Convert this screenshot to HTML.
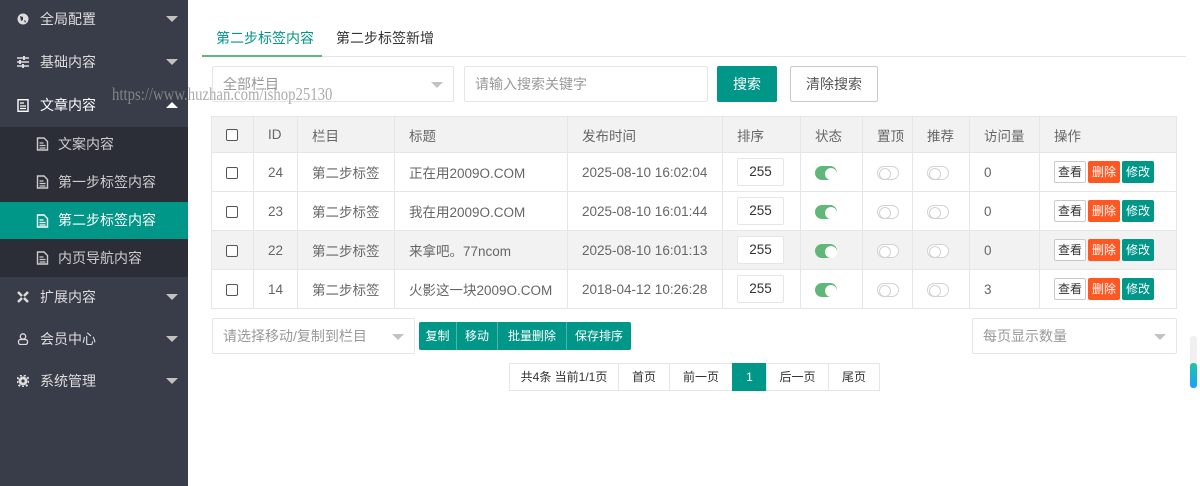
<!DOCTYPE html><html><head><meta charset="utf-8"><style>
*{box-sizing:border-box;margin:0;padding:0}
body{width:1200px;height:486px;overflow:hidden;background:#fff;font-family:"Liberation Sans","Noto Sans CJK SC",sans-serif;font-size:14px;color:#666;position:relative}
.side{position:absolute;left:0;top:0;width:188px;height:486px;background:#393d49}
.it{position:absolute;left:0;width:188px;height:38px;line-height:38px;color:#ddd;font-size:14px;padding-left:40px}
.it .ic{position:absolute;left:17px;top:13px;width:12px;height:12px}
.it .ar{position:absolute;right:10px;top:16px;border:6px solid transparent;border-top:6px solid #c2c2c2}
.it .up{top:10px;border-top-color:transparent;border-bottom:6px solid #fff}
.sub{position:absolute;left:0;top:127px;width:188px;height:150px;background:#2b2e37}
.si{position:absolute;left:0;width:188px;height:38px;line-height:38px;color:#ccc;padding-left:58px}
.si svg{position:absolute;left:36px;top:12px;width:13px;height:14px}
.act{background:#009688;color:#fff}
.abs{position:absolute}
.inp{position:absolute;border:1px solid #e6e6e6;border-radius:2px;height:36px;line-height:34px;padding-left:10px;color:#999;background:#fff}
.caret{position:absolute;right:10px;top:15px;border:6px solid transparent;border-top:6px solid #c2c2c2}
table{position:absolute;left:211px;top:116px;width:966px;border-collapse:collapse;font-size:13.5px;table-layout:fixed}
td,th{border:1px solid #e6e6e6;padding:0 0 0 14px;text-align:left;font-weight:normal;color:#666;height:39px;white-space:nowrap;overflow:hidden}
th{background:#f2f2f2;height:36px}
tr.g td{background:#f2f2f2}
.cb{display:inline-block;width:12px;height:12px;border:1px solid #555;border-radius:2px;background:#fff;vertical-align:middle}
.sort{display:inline-block;width:47px;height:28px;border:1px solid #e6e6e6;border-radius:2px;background:#fff;text-align:center;line-height:26px;color:#333}
.sw{display:inline-block;width:22px;height:14px;border-radius:8px;border:1px solid #d2d2d2;position:relative;vertical-align:middle;background:#fff}
.sw:after{content:"";position:absolute;left:1px;top:1px;width:10px;height:10px;border-radius:50%;border:1px solid #d2d2d2;background:#fff}
.sw.on{background:#5fb878;border-color:#5fb878}
.sw.on:after{left:9px;border-color:#fff}
.b{display:inline-block;height:22px;line-height:20px;padding:0 3px;font-size:12px;border-radius:2px;vertical-align:middle;margin-right:2px}
.bv{border:1px solid #c9c9c9;color:#333;background:#fff}
.bd{background:#ff5722;color:#fff;border:1px solid #ff5722}
.be{background:#009688;color:#fff;border:1px solid #009688}
.pg{position:absolute;top:363px;height:28px;line-height:26px;border:1px solid #e6e6e6;text-align:center;font-size:12px;color:#333;background:#fff}
.grp span{text-align:center;border-right:1px solid #4db6ac;display:block}
</style></head><body>
<div class="side">
<div class="it" style="top:0">全局配置<svg class="ic" viewBox="0 0 12 12"><circle cx="6" cy="6" r="5.5" fill="#ddd"/><path d="M3 3l3 1 0 3-2 1zM7 7l2 1-1 2z" fill="#393d49"/></svg><span class="ar"></span></div>
<div class="it" style="top:43px">基础内容<svg class="ic" viewBox="0 0 12 12"><path d="M0 2h12M0 6h12M0 10h12" stroke="#ddd" stroke-width="1.5"/><path d="M7 0v4M3 4v4M6 8v4" stroke="#ddd" stroke-width="2"/></svg><span class="ar"></span></div>
<div class="it" style="top:86px;color:#fff">文章内容<svg class="ic" viewBox="0 0 12 13" style="height:13px"><rect x="1" y="0.7" width="10" height="11.6" fill="none" stroke="#fff" stroke-width="1.4"/><path d="M3 4h4M3 7h6M3 9.5h6" stroke="#fff" stroke-width="1.2"/></svg><span class="ar up"></span></div>
<div class="sub"></div>
<div class="si" style="top:125px"><svg viewBox="0 0 13 14"><path d="M1.5 1h6.5l3.5 3.5v8.5h-10z" fill="none" stroke="#ccc" stroke-width="1.4"/><path d="M3.5 6h4M3.5 8.5h6M3.5 11h6" stroke="#ccc" stroke-width="1.2"/></svg>文案内容</div>
<div class="si" style="top:163px"><svg viewBox="0 0 13 14"><path d="M1.5 1h6.5l3.5 3.5v8.5h-10z" fill="none" stroke="#ccc" stroke-width="1.4"/><path d="M3.5 6h4M3.5 8.5h6M3.5 11h6" stroke="#ccc" stroke-width="1.2"/></svg>第一步标签内容</div>
<div class="si act" style="top:202px;height:37px;line-height:37px;color:#fff"><svg viewBox="0 0 13 14"><path d="M1.5 1h6.5l3.5 3.5v8.5h-10z" fill="none" stroke="#fff" stroke-width="1.4"/><path d="M3.5 6h4M3.5 8.5h6M3.5 11h6" stroke="#fff" stroke-width="1.2"/></svg>第二步标签内容</div>
<div class="si" style="top:239px"><svg viewBox="0 0 13 14"><path d="M1.5 1h6.5l3.5 3.5v8.5h-10z" fill="none" stroke="#ccc" stroke-width="1.4"/><path d="M3.5 6h4M3.5 8.5h6M3.5 11h6" stroke="#ccc" stroke-width="1.2"/></svg>内页导航内容</div>
<div class="it" style="top:278px">扩展内容<svg class="ic" viewBox="0 0 12 12"><path d="M1 1l4 4M11 1l-4 4M1 11l4-4M11 11l-4-4" stroke="#ddd" stroke-width="2.5"/></svg><span class="ar"></span></div>
<div class="it" style="top:320px">会员中心<svg class="ic" viewBox="0 0 12 12"><circle cx="6" cy="3.5" r="2.7" fill="none" stroke="#ddd" stroke-width="1.3"/><rect x="1.5" y="6.5" width="9" height="5" rx="2" fill="none" stroke="#ddd" stroke-width="1.3"/></svg><span class="ar"></span></div>
<div class="it" style="top:362px">系统管理<svg class="ic" viewBox="0 0 12 12"><circle cx="6" cy="6" r="4.5" fill="#ddd"/><circle cx="6" cy="6" r="5.8" fill="none" stroke="#ddd" stroke-width="2" stroke-dasharray="2 2"/><circle cx="6" cy="6" r="1.6" fill="#393d49"/></svg><span class="ar"></span></div>
</div>
<div class="abs" style="left:202px;top:56px;width:984px;height:1px;background:#e6e6e6"></div>
<div class="abs" style="left:216px;top:28px;color:#009688;font-size:14px">第二步标签内容</div>
<div class="abs" style="left:202px;top:55px;width:120px;height:2px;background:#5fb878"></div>
<div class="abs" style="left:336px;top:28px;color:#333">第二步标签新增</div>
<div class="inp" style="left:212px;top:66px;width:242px">全部栏目<span class="caret"></span></div>
<div class="inp" style="left:464px;top:66px;width:244px">请输入搜索关键字</div>
<div class="abs" style="left:717px;top:66px;width:60px;height:36px;background:#009688;border-radius:2px;color:#fff;text-align:center;line-height:36px">搜索</div>
<div class="abs" style="left:790px;top:66px;width:88px;height:36px;border:1px solid #c9c9c9;border-radius:2px;color:#555;text-align:center;line-height:34px">清除搜索</div>
<table>
<colgroup><col style="width:42px"><col style="width:44px"><col style="width:97px"><col style="width:173px"><col style="width:155px"><col style="width:78px"><col style="width:62px"><col style="width:50px"><col style="width:57px"><col style="width:70px"><col></colgroup>
<tr><th><span class="cb"></span></th><th>ID</th><th>栏目</th><th>标题</th><th>发布时间</th><th>排序</th><th>状态</th><th>置顶</th><th>推荐</th><th>访问量</th><th>操作</th></tr>
<tr><td><span class="cb"></span></td><td>24</td><td>第二步标签</td><td>正在用2009O.COM</td><td>2025-08-10 16:02:04</td><td><span class="sort">255</span></td><td><span class="sw on"></span></td><td><span class="sw"></span></td><td><span class="sw"></span></td><td>0</td><td><span class="b bv">查看</span><span class="b bd">删除</span><span class="b be">修改</span></td></tr>
<tr><td><span class="cb"></span></td><td>23</td><td>第二步标签</td><td>我在用2009O.COM</td><td>2025-08-10 16:01:44</td><td><span class="sort">255</span></td><td><span class="sw on"></span></td><td><span class="sw"></span></td><td><span class="sw"></span></td><td>0</td><td><span class="b bv">查看</span><span class="b bd">删除</span><span class="b be">修改</span></td></tr>
<tr class="g"><td><span class="cb"></span></td><td>22</td><td>第二步标签</td><td>来拿吧。77ncom</td><td>2025-08-10 16:01:13</td><td><span class="sort">255</span></td><td><span class="sw on"></span></td><td><span class="sw"></span></td><td><span class="sw"></span></td><td>0</td><td><span class="b bv">查看</span><span class="b bd">删除</span><span class="b be">修改</span></td></tr>
<tr><td><span class="cb"></span></td><td>14</td><td>第二步标签</td><td>火影这一块2009O.COM</td><td>2018-04-12 10:26:28</td><td><span class="sort">255</span></td><td><span class="sw on"></span></td><td><span class="sw"></span></td><td><span class="sw"></span></td><td>3</td><td><span class="b bv">查看</span><span class="b bd">删除</span><span class="b be">修改</span></td></tr>
</table>
<div class="inp" style="left:212px;top:318px;width:203px">请选择移动/复制到栏目<span class="caret"></span></div>
<div class="abs grp" style="left:419px;top:322px;width:212px;height:28px;background:#009688;border-radius:2px;color:#fff;font-size:12px;line-height:28px;display:flex">
<span style="width:38px">复制</span><span style="width:41px">移动</span><span style="width:69px">批量删除</span><span style="flex:1;border:none">保存排序</span></div>
<div class="inp" style="left:972px;top:318px;width:205px">每页显示数量<span class="caret"></span></div>
<div class="pg" style="left:509px;width:110px">共4条 当前1/1页</div>
<div class="pg" style="left:618px;width:52px">首页</div>
<div class="pg" style="left:669px;width:64px">前一页</div>
<div class="pg" style="left:732px;width:35px;background:#009688;border-color:#009688;color:#fff">1</div>
<div class="pg" style="left:766px;width:63px">后一页</div>
<div class="pg" style="left:828px;width:52px">尾页</div>
<div class="abs" style="left:1190px;top:336px;width:7px;height:50px;border-radius:3px;background:#f0f0f0"></div>
<div class="abs" style="left:1190px;top:363px;width:7px;height:25px;border-radius:3px;background:linear-gradient(#1cc6a0,#1e9fff)"></div>
<div class="abs" style="left:112px;top:84px;z-index:10;font-family:'Liberation Serif',serif;font-size:18px;color:rgba(150,150,150,.8);white-space:nowrap;transform:scaleX(0.82);transform-origin:0 0">https://www.huzhan.com/ishop25130</div>
</body></html>
